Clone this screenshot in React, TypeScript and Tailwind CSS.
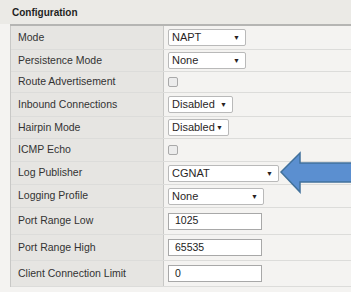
import React from 'react';

type Row = {
  label: string;
  kind: 'select' | 'check' | 'input';
  value?: string;
  w?: string;
  h: string;
};

const rows: Row[] = [
  { label: 'Mode', kind: 'select', value: 'NAPT', w: 'w-[78px]', h: 'h-[24px]' },
  { label: 'Persistence Mode', kind: 'select', value: 'None', w: 'w-[78px]', h: 'h-[22px]' },
  { label: 'Route Advertisement', kind: 'check', h: 'h-[21px]' },
  { label: 'Inbound Connections', kind: 'select', value: 'Disabled', w: 'w-[65px]', h: 'h-[24px]' },
  { label: 'Hairpin Mode', kind: 'select', value: 'Disabled', w: 'w-[61px]', h: 'h-[22px]' },
  { label: 'ICMP Echo', kind: 'check', h: 'h-[23px]' },
  { label: 'Log Publisher', kind: 'select', value: 'CGNAT', w: 'w-[111px]', h: 'h-[23px]' },
  { label: 'Logging Profile', kind: 'select', value: 'None', w: 'w-[96px]', h: 'h-[23px]' },
  { label: 'Port Range Low', kind: 'input', value: '1025', h: 'h-[27px]' },
  { label: 'Port Range High', kind: 'input', value: '65535', h: 'h-[26px]' },
  { label: 'Client Connection Limit', kind: 'input', value: '0', h: 'h-[26px]' },
];

const Control: React.FC<{ row: Row }> = ({ row }) => {
  if (row.kind === 'check') {
    return <div className="w-[10px] h-[10px] rounded-[2px] border border-[#a9a9a9] bg-[#ececec]" />;
  }
  if (row.kind === 'input') {
    return (
      <div className="w-[94px] h-[17px] border border-[#a8a8a8] bg-white flex items-center pl-[6px] text-[10.5px] text-[#222]">
        {row.value}
      </div>
    );
  }
  return (
    <div
      className={`${row.w} h-[17px] rounded-[2px] border border-[#b9b9b9] bg-white flex items-center justify-between pl-[3px] pr-[5px] text-[11px] text-[#2a1f1f]`}
    >
      <span>{row.value}</span>
      <span className="text-[7px] leading-none">▼</span>
    </div>
  );
};

const App: React.FC = () => {
  return (
    <div
      className="relative w-[351px] h-[292px] overflow-hidden bg-[#f4f3f1]"
      style={{ fontFamily: '"Liberation Sans", Arial, sans-serif' }}
    >
      <div className="h-[24px] bg-[#ebeae6] flex items-end pl-[12px] pb-[4px]">
        <span className="text-[10px] font-bold text-[#1f1f1f]">Configuration</span>
      </div>
      <div className="h-[2px] bg-[#b5b5b3] ml-[10px]" />
      <div className="ml-[10px] border-l border-[#c8c8c6]">
        {rows.map((row) => (
          <div key={row.label} className={`flex ${row.h} border-b border-[#dcdcda]`}>
            <div className="w-[153px] bg-[#e6e5e2] border-r border-[#c8c8c6] flex items-center pl-[7px] text-[10.5px] text-[#333]">
              {row.label}
            </div>
            <div className="flex-1 flex items-center pl-[4px]">
              <Control row={row} />
            </div>
          </div>
        ))}
      </div>
      <svg className="absolute left-[278px] top-[150px]" width="80" height="46" viewBox="0 0 80 46">
        <path
          d="M3 22 L22 3 L22 13 L78 13 L78 32 L22 32 L22 42 Z"
          fill="#5b8fd0"
          stroke="#41719c"
          strokeWidth="1.5"
          strokeLinejoin="miter"
        />
      </svg>
    </div>
  );
};

export default App;
